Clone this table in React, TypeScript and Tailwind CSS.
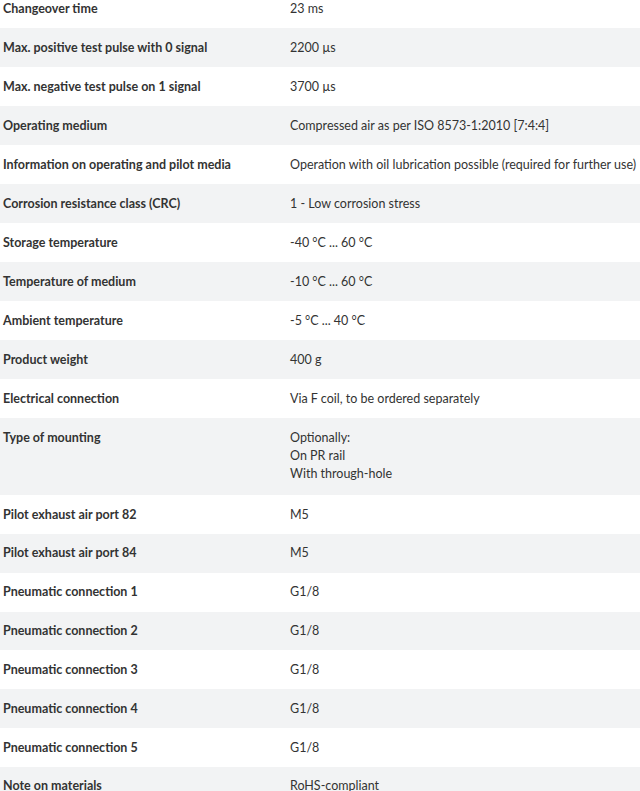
import React from "react";

type Row = { label: string; value: string[] };

const rows: Row[] = [
  { label: "Changeover time", value: ["23 ms"] },
  { label: "Max. positive test pulse with 0 signal", value: ["2200 µs"] },
  { label: "Max. negative test pulse on 1 signal", value: ["3700 µs"] },
  { label: "Operating medium", value: ["Compressed air as per ISO 8573-1:2010 [7:4:4]"] },
  {
    label: "Information on operating and pilot media",
    value: ["Operation with oil lubrication possible (required for further use)"],
  },
  { label: "Corrosion resistance class (CRC)", value: ["1 - Low corrosion stress"] },
  { label: "Storage temperature", value: ["-40 °C ... 60 °C"] },
  { label: "Temperature of medium", value: ["-10 °C ... 60 °C"] },
  { label: "Ambient temperature", value: ["-5 °C ... 40 °C"] },
  { label: "Product weight", value: ["400 g"] },
  { label: "Electrical connection", value: ["Via F coil, to be ordered separately"] },
  { label: "Type of mounting", value: ["Optionally:", "On PR rail", "With through-hole"] },
  { label: "Pilot exhaust air port 82", value: ["M5"] },
  { label: "Pilot exhaust air port 84", value: ["M5"] },
  { label: "Pneumatic connection 1", value: ["G1/8"] },
  { label: "Pneumatic connection 2", value: ["G1/8"] },
  { label: "Pneumatic connection 3", value: ["G1/8"] },
  { label: "Pneumatic connection 4", value: ["G1/8"] },
  { label: "Pneumatic connection 5", value: ["G1/8"] },
  { label: "Note on materials", value: ["RoHS-compliant"] },
];

const App: React.FC = () => {
  return (
    <div className="w-[640px] h-[791px] overflow-hidden bg-white font-['Lato',sans-serif] text-[#333] text-[12.5px] leading-[18px]">
      <div className="-mt-[11px]">
        {rows.map((row, i) => (
          <div
            key={i}
            className={`flex ${
              row.value.length > 1
                ? "pt-[10.5px] pb-[12.5px]"
                : i > 11
                ? "pt-[10.5px] pb-[10.35px]"
                : "py-[10.5px]"
            } ${i % 2 === 1 ? "bg-[#f2f3f4]" : "bg-white"}`}
          >
            <div className="w-[290px] shrink-0 pl-[3px] font-bold">{row.label}</div>
            <div className="flex-1 whitespace-nowrap">
              {row.value.map((v, j) => (
                <div key={j}>{v}</div>
              ))}
            </div>
          </div>
        ))}
      </div>
    </div>
  );
};

export default App;
